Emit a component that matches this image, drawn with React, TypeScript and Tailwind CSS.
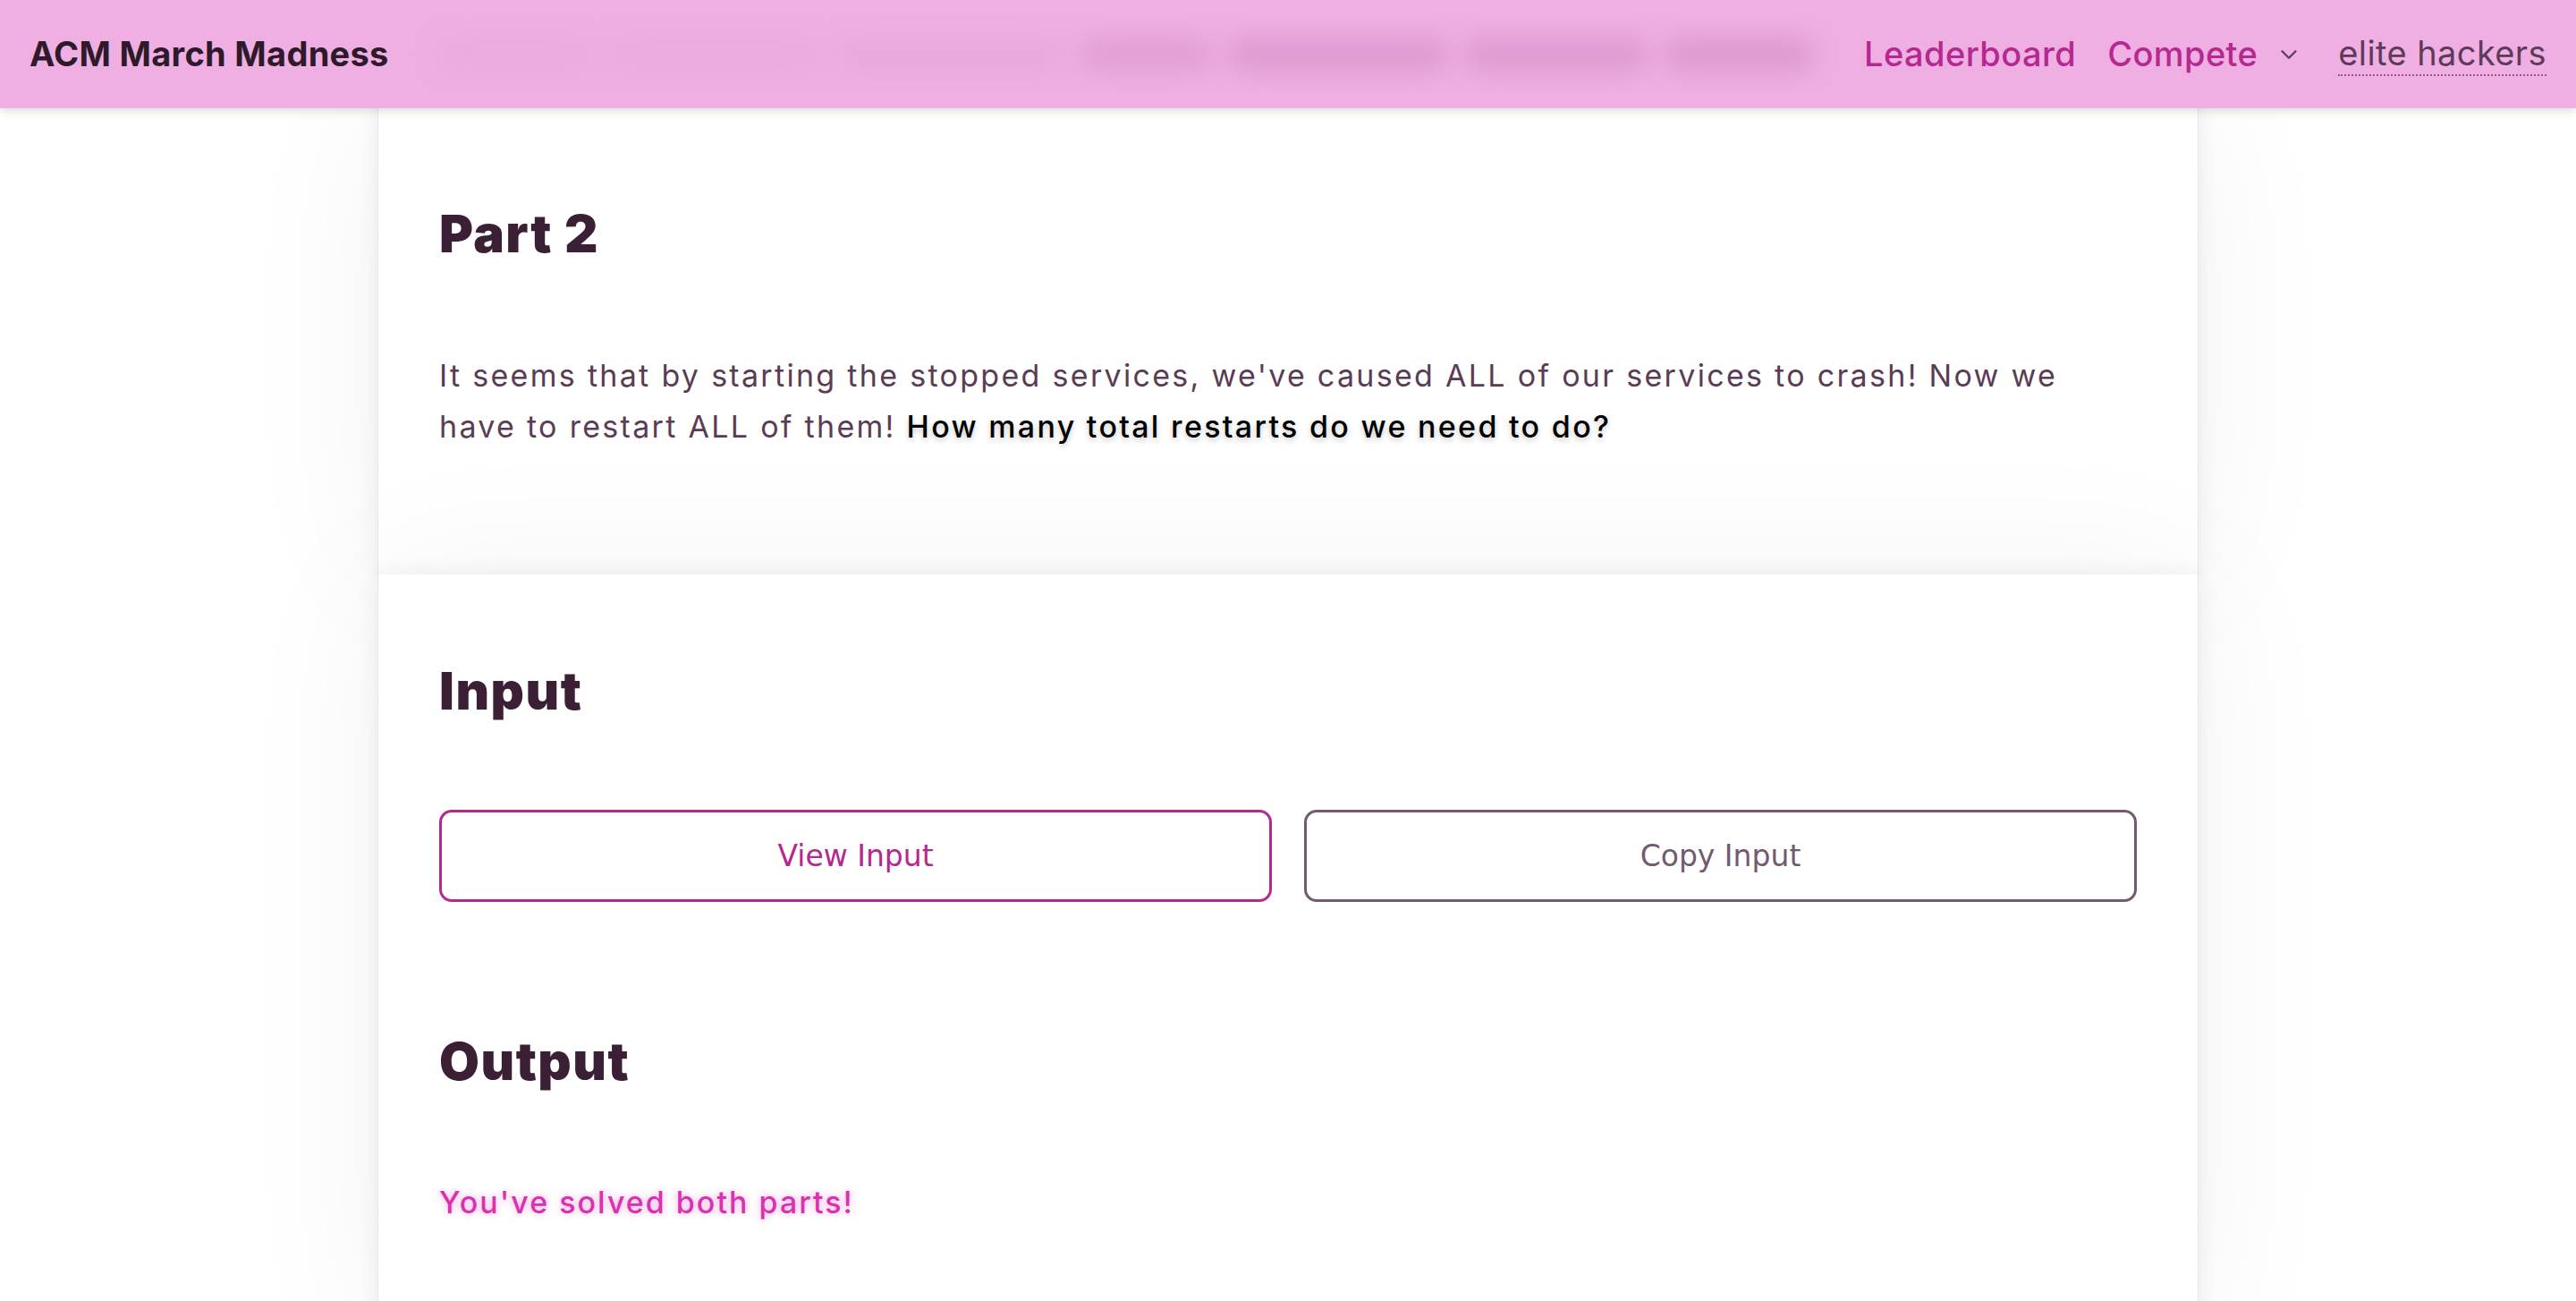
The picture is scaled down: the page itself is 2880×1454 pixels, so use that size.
import React from 'react';
import { ChevronDown } from 'lucide-react';

const font = "font-['Inter','Lato',sans-serif]";

const ghostBars = [
  { w: 'w-[180px]', tone: 'bg-[#e8aadc]' },
  { w: 'w-[240px]', tone: 'bg-[#e8aadc]' },
  { w: 'w-[260px]', tone: 'bg-[#e6a7da]' },
  { w: 'w-[150px]', tone: 'bg-[#de9bd1]' },
  { w: 'w-[250px]', tone: 'bg-[#da96cd]' },
  { w: 'w-[210px]', tone: 'bg-[#da96cd]' },
  { w: 'w-[170px]', tone: 'bg-[#d995cc]' },
];

const Navbar: React.FC = () => (
  <header className={`relative z-20 h-[121px] bg-[#efafe2] shadow-[0_4px_10px_rgba(0,0,0,0.12)] flex items-center pl-[33px] pr-[33px] ${font}`}>
    <h1 className="text-[38px] font-bold text-[#2e1a2a] tracking-[0.3px] whitespace-nowrap">ACM March Madness</h1>

    <div className="flex-1 flex items-center gap-[14px] overflow-hidden pl-[50px] pr-[40px] py-6" aria-hidden>
      {ghostBars.map((b, i) => (
        <div key={i} className={`${b.w} ${b.tone} h-[40px] shrink-0 rounded-full blur-[14px] opacity-80`} />
      ))}
    </div>

    <nav className="flex items-center text-[38px] tracking-[0.4px]">
      <a href="#" className="text-[#b5288f] font-medium">Leaderboard</a>
      <button className="ml-[35px] flex items-center text-[#b5288f] font-medium tracking-[0.4px]">
        Compete
        <ChevronDown size={30} strokeWidth={1.8} className="ml-[20px] text-[#5e3b5a]" />
      </button>
      <a href="#" className="ml-[40px] text-[#5e3b5a] border-b-2 border-dotted border-[#5e3b5a]/70 leading-tight">elite hackers</a>
    </nav>
  </header>
);

const Card: React.FC<{ className?: string; children: React.ReactNode }> = ({ className = '', children }) => (
  <section
    className={`relative bg-white border-x border-[#ebe8eb] px-[68px] shadow-[0_0_22px_rgba(0,0,0,0.07),0_0_160px_rgba(0,0,0,0.05)] ${className}`}
  >
    {children}
  </section>
);

const Heading: React.FC<{ children: React.ReactNode }> = ({ children }) => (
  <h2 className="text-[58px] leading-[70px] font-black text-[#3b2035] tracking-[1.5px]">{children}</h2>
);

export default function App() {
  return (
    <div className={`min-h-screen bg-white ${font}`}>
      <Navbar />
      <main className="mx-auto w-[2036px]">
        <Card className="pt-[105px] pb-[137px]">
          <Heading>Part 2</Heading>
          <p className="mt-[95px] max-w-[1860px] text-[34px] leading-[57px] tracking-[2.3px] text-[#5a3d55]">
            It seems that by starting the stopped services, we've caused ALL of our services to crash! Now we
            have to restart ALL of them!{' '}
            <strong className="text-black font-medium [text-shadow:0_3px_6px_rgba(0,0,0,0.22)]">
              How many total restarts do we need to do?
            </strong>
          </p>
        </Card>

        <Card className="pt-[95px] pb-[120px]">
          <Heading>Input</Heading>
          <div className="mt-[98px] grid grid-cols-2 gap-[36px]">
            <button className="h-[103px] rounded-[14px] border-[3px] border-[#b5288f] text-[#b5288f] text-[33px] font-['DejaVu_Sans',sans-serif] bg-white">
              View Input
            </button>
            <button className="h-[103px] rounded-[14px] border-[3px] border-[#735a70] text-[#735a70] text-[33px] font-['DejaVu_Sans',sans-serif] bg-white">
              Copy Input
            </button>
          </div>

          <div className="mt-[143px]">
            <Heading>Output</Heading>
          </div>
          <p className="mt-[94px] text-[34px] leading-[57px] tracking-[2px] font-medium text-[#d932b0] [text-shadow:0_0_8px_rgba(217,50,176,0.45)]">
            You've solved both parts!
          </p>
        </Card>
      </main>
    </div>
  );
}
